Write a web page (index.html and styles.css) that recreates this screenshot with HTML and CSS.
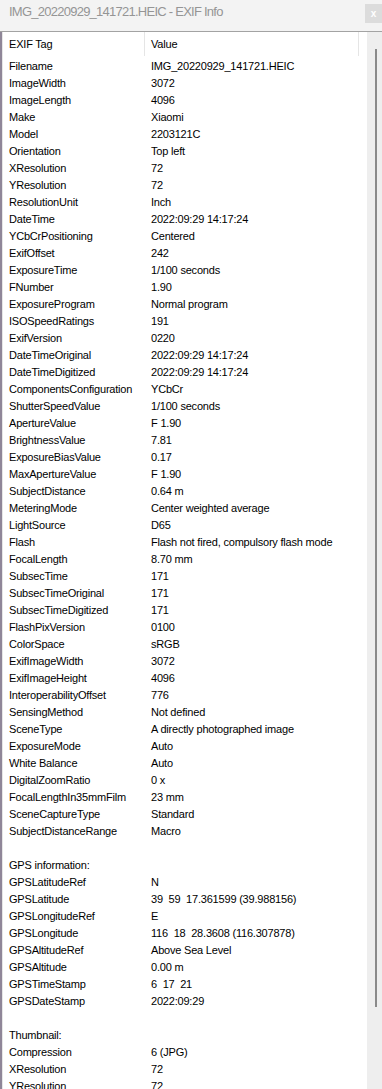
FILE: index.html
```html
<!DOCTYPE html>
<html lang="en">
<head>
  <meta charset="UTF-8">
  <meta name="viewport" content="width=device-width, initial-scale=1.0">
  <title>EXIF Info</title>
  <link rel="stylesheet" href="styles.css">
</head>
<body>
  <div id="app">
    <div class="titlebar">
      <span class="title">IMG_20220929_141721.HEIC - EXIF Info</span>
      <span class="close">x</span>
    </div>
    <div class="frame">
      <div class="list">
        <div class="header">
          <div class="cell tag">EXIF Tag</div>
          <div class="cell value">Value</div>
        </div>
        <div id="rows"></div>
      </div>
      <div class="scrollbar"><div class="thumb"></div></div>
    </div>
  </div>

  <script>
    const rowsEl = document.getElementById('rows');

    const data = [
      ['Filename', 'IMG_20220929_141721.HEIC'],
      ['ImageWidth', '3072'],
      ['ImageLength', '4096'],
      ['Make', 'Xiaomi'],
      ['Model', '2203121C'],
      ['Orientation', 'Top left'],
      ['XResolution', '72'],
      ['YResolution', '72'],
      ['ResolutionUnit', 'Inch'],
      ['DateTime', '2022:09:29 14:17:24'],
      ['YCbCrPositioning', 'Centered'],
      ['ExifOffset', '242'],
      ['ExposureTime', '1/100 seconds'],
      ['FNumber', '1.90'],
      ['ExposureProgram', 'Normal program'],
      ['ISOSpeedRatings', '191'],
      ['ExifVersion', '0220'],
      ['DateTimeOriginal', '2022:09:29 14:17:24'],
      ['DateTimeDigitized', '2022:09:29 14:17:24'],
      ['ComponentsConfiguration', 'YCbCr'],
      ['ShutterSpeedValue', '1/100 seconds'],
      ['ApertureValue', 'F 1.90'],
      ['BrightnessValue', '7.81'],
      ['ExposureBiasValue', '0.17'],
      ['MaxApertureValue', 'F 1.90'],
      ['SubjectDistance', '0.64 m'],
      ['MeteringMode', 'Center weighted average'],
      ['LightSource', 'D65'],
      ['Flash', 'Flash not fired, compulsory flash mode'],
      ['FocalLength', '8.70 mm'],
      ['SubsecTime', '171'],
      ['SubsecTimeOriginal', '171'],
      ['SubsecTimeDigitized', '171'],
      ['FlashPixVersion', '0100'],
      ['ColorSpace', 'sRGB'],
      ['ExifImageWidth', '3072'],
      ['ExifImageHeight', '4096'],
      ['InteroperabilityOffset', '776'],
      ['SensingMethod', 'Not defined'],
      ['SceneType', 'A directly photographed image'],
      ['ExposureMode', 'Auto'],
      ['White Balance', 'Auto'],
      ['DigitalZoomRatio', '0 x'],
      ['FocalLengthIn35mmFilm', '23 mm'],
      ['SceneCaptureType', 'Standard'],
      ['SubjectDistanceRange', 'Macro'],
      ['', ''],
      ['GPS information:', ''],
      ['GPSLatitudeRef', 'N'],
      ['GPSLatitude', '39  59  17.361599 (39.988156)'],
      ['GPSLongitudeRef', 'E'],
      ['GPSLongitude', '116  18  28.3608 (116.307878)'],
      ['GPSAltitudeRef', 'Above Sea Level'],
      ['GPSAltitude', '0.00 m'],
      ['GPSTimeStamp', '6  17  21'],
      ['GPSDateStamp', '2022:09:29'],
      ['', ''],
      ['Thumbnail:', ''],
      ['Compression', '6 (JPG)'],
      ['XResolution', '72'],
      ['YResolution', '72'],
    ];

    data.forEach(([tag, value]) => {
      const row = document.createElement('div');
      row.className = 'row';
      const t = document.createElement('div');
      t.className = 'cell tag';
      t.textContent = tag;
      const v = document.createElement('div');
      v.className = 'cell value';
      v.textContent = value;
      row.append(t, v);
      rowsEl.appendChild(row);
    });
  </script>
</body>
</html>
```

FILE: styles.css
```css
body {
  margin: 0;
  padding: 0;
  background: #f3f3f3;
  font-family: "Liberation Sans", Arial, sans-serif;
  color: #000;
  overflow: hidden;
}
#app {
  height: 1089px;
  display: flex;
  flex-direction: column;
}
.titlebar {
  height: 32px;
  display: flex;
  align-items: flex-start;
  justify-content: space-between;
  border-bottom: 1px solid #a3a3a3;
  box-sizing: border-box;
}
.title {
  font-size: 13px;
  letter-spacing: -0.75px;
  color: #959595;
  padding: 4px 0 0 9px;
}
.close {
  width: 17px;
  height: 19px;
  margin-top: 4px;
  background: #dcdcdc;
  color: #fff;
  font-size: 10px;
  font-weight: bold;
  display: flex;
  align-items: center;
  justify-content: center;
}
.frame {
  flex: 1;
  display: flex;
  overflow: hidden;
}
.list {
  flex: 1;
  background: #fff;
  border-left: 2px solid #8f8698;
  padding-left: 1px;
  box-shadow: inset 1px 0 0 #e6e6e6;
}
.header {
  display: flex;
  height: 24px;
  width: 356px;
}
.header .cell {
  height: 24px;
  padding-top: 4px;
  border-right: 1px solid #e5e5e5;
}
.row {
  display: flex;
  height: 17px;
}
.cell {
  font-size: 11px;
  letter-spacing: -0.2px;
  line-height: 17px;
  white-space: pre;
  box-sizing: border-box;
}
.row .cell {
  padding-top: 2px;
}
.tag {
  width: 142px;
  padding-left: 6px;
}
.value {
  width: 214px;
  padding-left: 6px;
}
.scrollbar {
  width: 15px;
  background: #eeeeee;
  padding-top: 17px;
  box-sizing: border-box;
}
.thumb {
  width: 2px;
  height: 958px;
  margin-left: 8px;
  background: #8a8a8a;
}
```
